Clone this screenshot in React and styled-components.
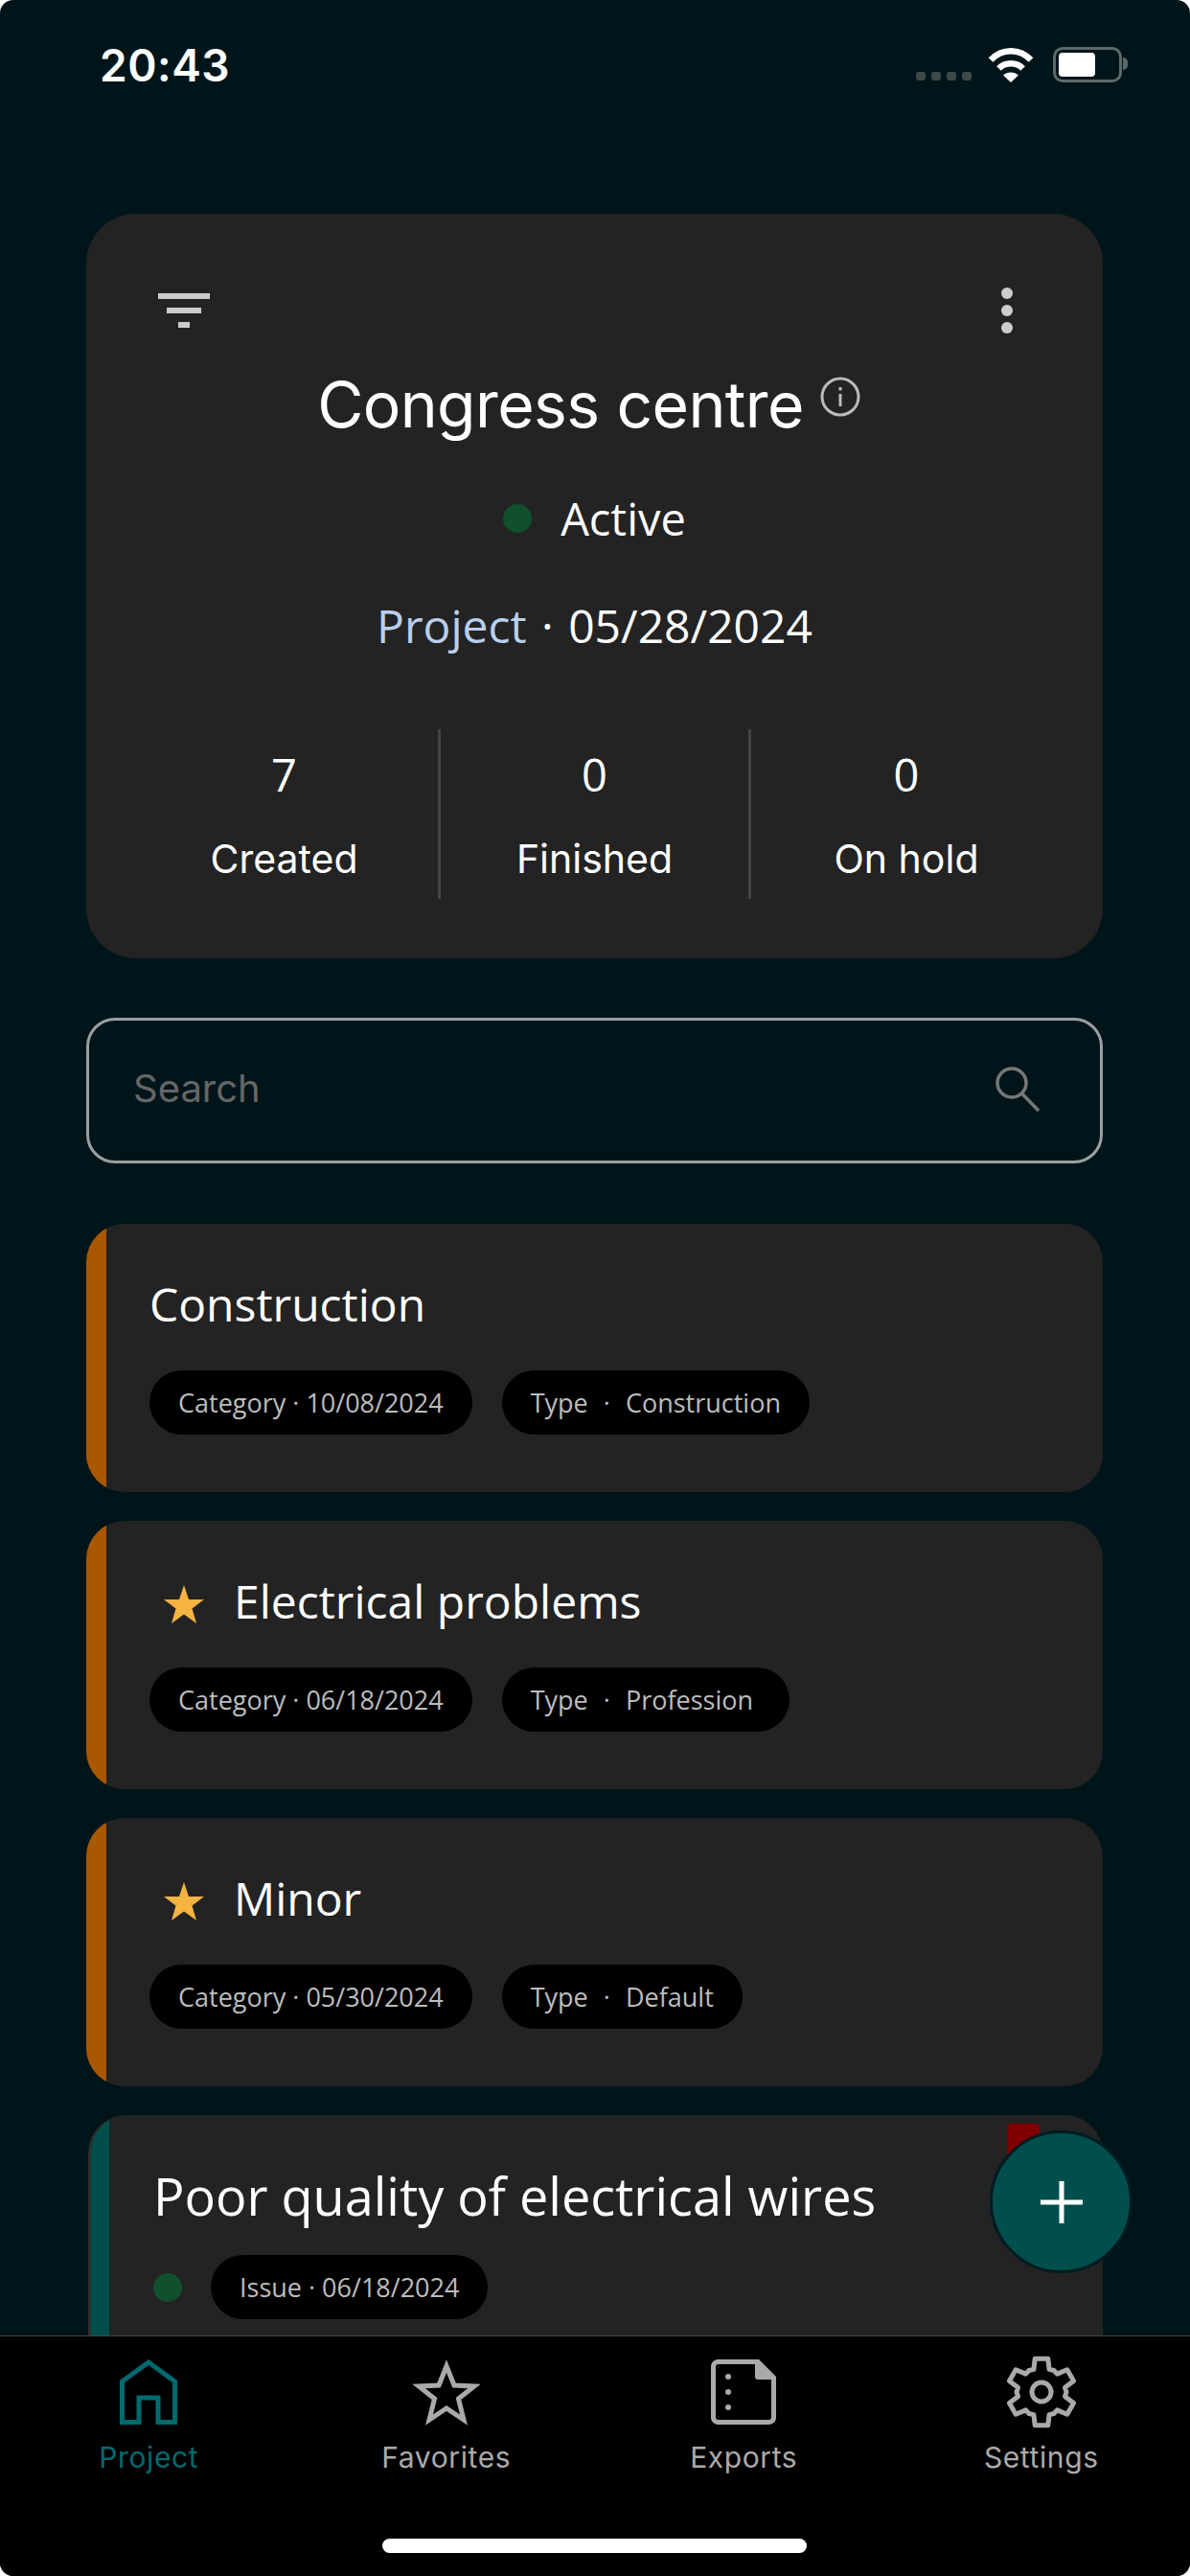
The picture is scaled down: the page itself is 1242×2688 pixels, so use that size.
import React from "react";
import styled, { createGlobalStyle } from "styled-components";

const Global = createGlobalStyle`
  html, body { margin: 0; padding: 0; background: #fff; }
  * { box-sizing: border-box; }
`;
const OPEN = `"Open Sans", "Noto Sans", sans-serif`;
const INTER = `Inter, "Liberation Sans", sans-serif`;

const Screen = styled.div`
  position: relative; width: 1242px; height: 2688px; background: #00151a;
  display: flex; flex-direction: column; overflow: hidden; border-radius: 14px;
  color: #fff; font-family: ${OPEN};
`;
const StatusBar = styled.div`
  height: 223px; flex: none; display: flex; align-items: flex-start; justify-content: space-between;
  padding: 42px 71px 0 104px;
`;
const Time = styled.div`
  font: 600 46px/52px ${INTER}; letter-spacing: 0.5px;
`;
const StatusIcons = styled.div`
  display: flex; align-items: flex-start; margin-top: 7px;
`;
const SignalDots = styled.div`
  display: flex; gap: 6px; margin-top: 26px; margin-right: 17px;
`;
const SignalDot = styled.span`
  width: 10px; height: 9px; border-radius: 3px; background: #3c4a4a;
`;
const Battery = styled.div`
  position: relative; width: 72px; height: 37px; margin-left: 20px; border: 3px solid #5c6a6a; border-radius: 10px; padding: 3px;
  &::after { content: ""; position: absolute; left: 70px; top: 8px; width: 5px; height: 13px; border-radius: 0 6px 6px 0; background: #5c6a6a; }
`;
const BatteryFill = styled.div`
  width: 38px; height: 100%; background: #fff; border-radius: 4px;
`;
const Scroll = styled.main`
  flex: 1; min-height: 0; overflow: hidden; padding: 0 91px 0 90px;
`;
const HeaderCard = styled.section`
  height: 777px; background: #232323; border-radius: 52px; padding-top: 77px;
`;
const Toolbar = styled.div`
  height: 48px; display: flex; justify-content: space-between; align-items: center; padding: 0 94px 0 75px;
`;
const FilterIcon = styled.div`
  display: flex; flex-direction: column; align-items: center; gap: 9px; width: 54px;
`;
const FilterBar = styled.span`
  display: block; height: 6px; width: ${p => p.$w}px; background: #ccc;
`;
const MoreIcon = styled.div`
  display: flex; flex-direction: column; gap: 6px;
`;
const MoreDot = styled.span`
  width: 12px; height: 12px; border-radius: 50%; background: #ccc;
`;
const TitleRow = styled.div`
  display: flex; justify-content: center; gap: 17px; margin-top: 34px; padding-right: 12px; align-items: flex-start;
`;
const Title = styled.h1`
  margin: 0; font: 400 66px/80px ${INTER}; letter-spacing: -0.6px; color: #fff;
`;
const InfoIcon = styled.svg`
  width: 42px; height: 42px; margin-top: 11px; flex: none;
`;
const StatusRow = styled.div`
  display: flex; justify-content: center; align-items: center; gap: 30px; margin-top: 49px; height: 60px;
`;
const StatusDot = styled.span`
  width: 30px; height: 30px; border-radius: 50%; background: #10502d; flex: none;
`;
const StatusText = styled.span`
  font: 400 47px/60px ${OPEN};
`;
const MetaRow = styled.div`
  display: flex; justify-content: center; margin-top: 52px; font: 400 48px/60px ${OPEN}; white-space: pre; word-spacing: 3px;
`;
const MetaType = styled.span`
  color: #b9cfee;
`;
const Stats = styled.div`
  display: grid; grid-template-columns: repeat(3, 324px); margin: 78px 0 0 46px;
`;
const Stat = styled.div`
  height: 177px; display: flex; flex-direction: column; align-items: center;
  padding-top: 19px; border-right: ${p => (p.$last ? "none" : "3px solid #444")};
`;
const StatValue = styled.div`
  font: 400 47px/56px ${OPEN};
`;
const StatLabel = styled.div`
  font: 400 41px/50px ${INTER}; margin-top: 35px;
`;
const SearchBox = styled.div`
  height: 152px; margin-top: 62px; border: 3px solid #9a9f9f; border-radius: 30px;
  display: flex; align-items: center; justify-content: space-between; padding: 0 62px 4px 46px;
`;
const SearchText = styled.span`
  font: 400 40px/50px ${INTER}; color: #666;
`;
const SearchIcon = styled.svg`
  width: 48px; height: 48px; flex: none;
`;
const List = styled.div`
  display: flex; flex-direction: column; gap: 30px; margin-top: 63px;
`;
const ItemCard = styled.article`
  height: 280px; flex: none; display: flex; overflow: hidden; background: #232323; border-radius: 40px;
  ${p => p.$outlined && `border-left: 3px solid #2e2e2e; margin-left: 2px;`}
`;
const Stripe = styled.div`
  width: ${p => p.$w || 21}px; flex: none; background: ${p => p.$color};
`;
const ItemBody = styled.div`
  flex: 1; min-width: 0; padding: ${p => p.$pad || "53px 0 0 45px"}; position: relative;
`;
const ItemHead = styled.div`
  display: flex; align-items: center; height: 62px;
`;
const ItemTitle = styled.h2`
  margin: 0; font: 400 ${p => p.$size || 48}px/62px ${OPEN}; color: #fff; white-space: nowrap;
`;
const StarIcon = styled.svg`
  width: 42px; height: 40px; margin: 6px 31px 0 15px; flex: none;
`;
const Pills = styled.div`
  display: flex; align-items: center; gap: ${p => p.$gap || 31}px; margin-top: ${p => p.$top || 38}px;
`;
const Pill = styled.span`
  height: 67px; padding: 0 ${p => p.$endPad || 30}px 0 30px; border-radius: 34px; background: #000; color: #bdbdbd;
  display: flex; align-items: center; font: 400 27px/36px ${OPEN}; white-space: pre;
  word-spacing: ${p => (p.$type ? 1 : 0)}px;
`;
const Flag = styled.div`
  position: absolute; top: 9px; right: 66px; width: 34px; height: 60px; background: #800000; border-radius: 5px 5px 0 0;
`;
const Fab = styled.button`
  position: absolute; left: 1033px; top: 2223px; width: 149px; height: 149px; border-radius: 50%;
  background: #004f4d; border: 3px solid #001c20; padding: 0;
  display: flex; align-items: center; justify-content: center;
`;
const Nav = styled.nav`
  position: relative; z-index: 2; height: 251px; flex: none; background: #000; border-top: 1px solid #444;
  display: grid; grid-template-columns: repeat(4, 1fr); align-content: start; padding-top: 20px;
`;
const NavItem = styled.div`
  display: flex; flex-direction: column; align-items: center; color: ${p => (p.$active ? "#006a6e" : "#aaa")};
`;
const NavIconBox = styled.div`
  height: 76px; display: flex; align-items: center; justify-content: center;
`;
const NavLabel = styled.span`
  font: 400 30px/40px ${INTER}; letter-spacing: 0.6px; margin-top: 10px;
`;
const HomeBar = styled.div`
  position: absolute; left: 399px; top: 211px; width: 443px; height: 15px; border-radius: 8px; background: #fff;
`;

const WifiIcon = () => (
  <svg width="48" height="37" viewBox="0 0 48 37" fill="none">
    <path d="M3 13.5C15 1 33 1 45 13.5" stroke="#fff" strokeWidth="6.5" />
    <path d="M11.5 22.5C18 15.5 30 15.5 36.5 22.5" stroke="#fff" strokeWidth="6.5" />
    <path d="M16 29.5C20 25.5 28 25.5 32 29.5L24 37Z" fill="#fff" />
  </svg>
);
const FilledStar = () => (
  <StarIcon viewBox="0 0 42 40">
    <path d="M21 0L26 15H42L29.5 24.5L34 40L21 30.5L8 40L12.5 24.5L0 15H16Z" fill="#f5b342" />
  </StarIcon>
);
const HomeIcon = () => (
  <svg width="60" height="68" viewBox="0 0 60 68" fill="none" stroke="currentColor" strokeWidth="5">
    <path d="M2.5 65.500V23L30 3L57.500 23V65.500H40V40H20V65.500Z" />
  </svg>
);
const StarOutline = () => (
  <svg width="74" height="70" viewBox="0 0 74 70" fill="none" stroke="currentColor" strokeWidth="5" strokeMiterlimit="10">
    <path d="M37 8L45 28L66 29L49.500 42L55 64L37 52L19 64L24.500 42L8 29L29 28Z" />
  </svg>
);
const ExportIcon = () => (
  <svg width="68" height="68" viewBox="0 0 68 68" fill="currentColor">
    <path d="M8 2.500H49L65.500 19V60A5 5 0 0 1 60.500 65.500H8A5 5 0 0 1 2.500 60V8A5 5 0 0 1 8 2.500Z" fill="none" stroke="currentColor" strokeWidth="5" />
    <path d="M46 3H49L66 20V21H49A3 3 0 0 1 46 18Z" />
    <circle cx="18" cy="18" r="3" />
    <circle cx="18" cy="34" r="3" />
    <circle cx="18" cy="50" r="3" />
  </svg>
);
const gearPath = (() => {
  const pts = [];
  for (let i = 0; i < 6; i++) {
    const a = i * 60;
    [[26, -30], [25, -19], [35.500, -11], [35.500, 11], [25, 19]].forEach(([r, d]) => {
      const t = ((a + d - 90) * Math.PI) / 180;
      pts.push(`${(38 + r * Math.cos(t)).toFixed(1)} ${(38 + r * Math.sin(t)).toFixed(1)}`);
    });
  }
  return `M${pts.join("L")}Z`;
})();
const GearIcon = () => (
  <svg width="76" height="76" viewBox="0 0 76 76" fill="none" stroke="currentColor" strokeWidth="5" strokeLinejoin="round">
    <path d={gearPath} />
    <circle cx="38" cy="38" r="10" />
  </svg>
);

const items = [
  { title: "Construction", pills: [["Category · 10/08/2024"], ["Type  ·  Construction", 30]] },
  { title: "Electrical problems", star: true, pills: [["Category · 06/18/2024"], ["Type  ·  Profession", 38]] },
  { title: "Minor", star: true, pills: [["Category · 05/30/2024"], ["Type  ·  Default", 30]] },
];
const stats = [["7", "Created"], ["0", "Finished"], ["0", "On hold"]];
const navs = [
  ["Project", HomeIcon, true],
  ["Favorites", StarOutline],
  ["Exports", ExportIcon],
  ["Settings", GearIcon],
];

export default function App() {
  return (
    <Screen>
      <Global />
      <StatusBar>
        <Time>20:43</Time>
        <StatusIcons>
          <SignalDots>{[0, 1, 2, 3].map(i => <SignalDot key={i} />)}</SignalDots>
          <WifiIcon />
          <Battery><BatteryFill /></Battery>
        </StatusIcons>
      </StatusBar>
      <Scroll>
        <HeaderCard>
          <Toolbar>
            <FilterIcon>
              <FilterBar $w={54} /><FilterBar $w={36} /><FilterBar $w={12} />
            </FilterIcon>
            <MoreIcon><MoreDot /><MoreDot /><MoreDot /></MoreIcon>
          </Toolbar>
          <TitleRow>
            <Title>Congress centre</Title>
            <InfoIcon viewBox="0 0 42 42" fill="none">
              <circle cx="21" cy="21" r="19" stroke="#bbb" strokeWidth="3" />
              <rect x="19.500" y="18" width="3" height="13" fill="#bbb" />
              <rect x="19.500" y="11" width="3" height="3.500" fill="#bbb" />
            </InfoIcon>
          </TitleRow>
          <StatusRow><StatusDot /><StatusText>Active</StatusText></StatusRow>
          <MetaRow><MetaType>Project</MetaType> · 05/28/2024</MetaRow>
          <Stats>
            {stats.map(([v, l], i) => (
              <Stat key={l} $last={i === 2}><StatValue>{v}</StatValue><StatLabel>{l}</StatLabel></Stat>
            ))}
          </Stats>
        </HeaderCard>
        <SearchBox>
          <SearchText>Search</SearchText>
          <SearchIcon viewBox="0 0 48 48" fill="none" stroke="#777" strokeWidth="3.500">
            <circle cx="18" cy="18" r="15" />
            <path d="M28.500 29L46 47" />
          </SearchIcon>
        </SearchBox>
        <List>
          {items.map(it => (
            <ItemCard key={it.title}>
              <Stripe $color="#a95700" />
              <ItemBody>
                <ItemHead>
                  {it.star && <FilledStar />}
                  <ItemTitle>{it.title}</ItemTitle>
                </ItemHead>
                <Pills>
                  {it.pills.map(([p, end]) => <Pill key={p} $type={Boolean(end)} $endPad={end}>{p}</Pill>)}
                </Pills>
              </ItemBody>
            </ItemCard>
          ))}
          <ItemCard $outlined>
            <Stripe $color="#004f4d" $w={19} />
            <ItemBody $pad="53px 0 0 46px">
              <Flag />
              <ItemHead><ItemTitle $size={54}>Poor quality of electrical wires</ItemTitle></ItemHead>
              <Pills $top={31} $gap={30}><StatusDot />
                <Pill>Issue · 06/18/2024</Pill>
              </Pills>
            </ItemBody>
          </ItemCard>
        </List>
      </Scroll>
      <Fab aria-label="Add">
        <svg width="44" height="44" viewBox="0 0 44 44" fill="#fff"><rect x="19.500" width="5" height="44" /><rect y="19.500" width="44" height="5" /></svg>
      </Fab>
      <Nav>
        {navs.map(([label, Icon, active]) => (
          <NavItem key={label} $active={active}>
            <NavIconBox><Icon /></NavIconBox>
            <NavLabel>{label}</NavLabel>
          </NavItem>
        ))}
        <HomeBar />
      </Nav>
    </Screen>
  );
}
